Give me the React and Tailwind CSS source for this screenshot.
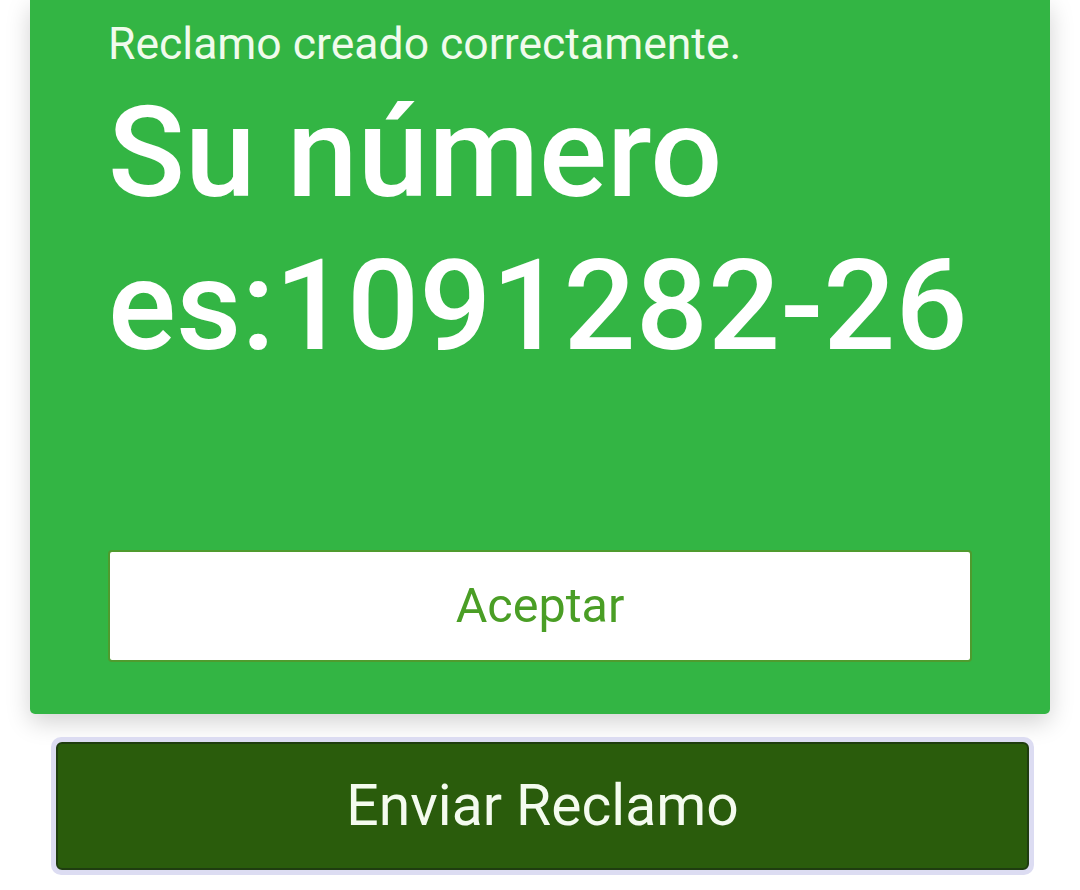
import React from 'react';

const font = { fontFamily: 'Roboto, "Noto Sans", sans-serif' };

const App = () => {
  return (
    <div className="w-[1080px] h-[890px] bg-white overflow-hidden" style={font}>
      <div className="ml-[30px] w-[1020px] bg-[#33b544] rounded-b-[5px] px-[78px] pb-[52px] shadow-[0_8px_24px_rgba(0,0,0,0.18)]">
        <div className="pt-[18px] text-[44.5px] leading-[53px] text-[#f0fbec]">
          Reclamo creado correctamente.
        </div>
        <div className="mt-[5px] text-[127px] leading-[153px] font-medium text-white whitespace-nowrap">
          Su número
          <br />
          es:1091282-26
        </div>
        <button className="mt-[168px] w-full h-[112px] bg-white rounded-[4px] border-2 border-[#4f9b2e] text-[#4a9e25] text-[48.5px] flex items-center justify-center">
          Aceptar
        </button>
      </div>
      <div className="ml-[51px] mt-[23px] w-[983px] p-[5px] bg-[#dcdcf2] rounded-[10px]">
        <button className="w-full h-[128px] bg-[#2a5c0c] border-2 border-[#1f3d10] rounded-[6px] text-[#f4fbef] text-[57px] flex items-center justify-center">
          Enviar Reclamo
        </button>
      </div>
    </div>
  );
};

export default App;
